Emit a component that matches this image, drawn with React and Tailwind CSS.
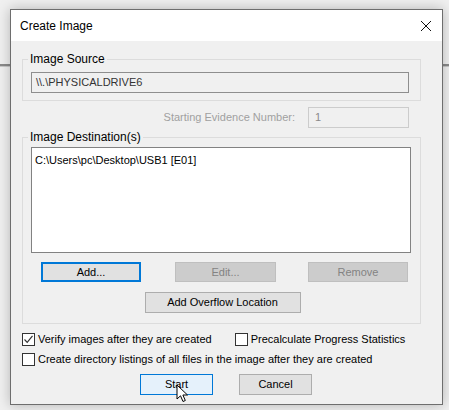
import React from 'react'

const font = { fontFamily: '"Liberation Sans", Arial, sans-serif' }

const Btn = ({ children, className = '' }) => (
  <div
    className={`flex items-center justify-center h-[20px] border text-[11px] leading-none whitespace-nowrap ${className}`}
  >
    {children}
  </div>
)

const Check = ({ checked }) => (
  <div className="w-[13px] h-[13px] border border-[#333] bg-white flex items-center justify-center shrink-0">
    {checked && (
      <svg width="11" height="11" viewBox="0 0 11 11">
        <path d="M1.5 5.5 L4.2 8.3 L9.5 1.8" fill="none" stroke="#333" strokeWidth="1.2" />
      </svg>
    )}
  </div>
)

const Cursor = () => (
  <svg width="14" height="20" viewBox="0 0 14 20" className="absolute left-[176px] top-[384px] z-20">
    <path
      d="M1 1 L1 15 L4.5 11.8 L7 17.5 L9.3 16.5 L6.9 11 L11.5 11 Z"
      fill="#fff"
      stroke="#000"
      strokeWidth="1"
      strokeLinejoin="round"
    />
  </svg>
)

export default function App() {
  return (
    <div className="relative w-[449px] h-[410px] bg-[#f0f0f0] overflow-hidden" style={font}>
      <div className="absolute left-0 right-0 top-[64px] h-[2px] bg-[#8a8a8a]" />
      <div className="absolute left-0 right-0 top-[66px] h-[1px] bg-[#c8c8c8]" />

      <div className="relative z-10 ml-[10px] mt-[9px] w-[433px] h-[396px] border border-[#6e6e6e] bg-[#f0f0f0] shadow-[0_0_12px_rgba(0,0,0,0.25)] flex flex-col">
        <div className="h-[31px] bg-white flex items-center justify-between pl-[9px] pr-[10px] shrink-0">
          <span className="text-[12px] text-black">Create Image</span>
          <svg width="12" height="12" viewBox="0 0 12 12">
            <path d="M1 1 L11 11 M11 1 L1 11" stroke="#111" strokeWidth="1" />
          </svg>
        </div>

        <div className="px-[11px] text-[11px] text-black whitespace-nowrap">
          <fieldset className="mt-[10px] w-[399px] h-[50px] border border-[#dcdcdc]">
            <legend className="ml-[5px] px-[2px] leading-[16px] text-[12px]">Image Source</legend>
            <div className="ml-[8px] mt-[5px] w-[378px] h-[21px] border border-[#8e8e8e] bg-[#f0f0f0] flex items-center pl-[4px] text-[#333]">
              \\.\PHYSICALDRIVE6
            </div>
          </fieldset>

          <div className="mt-[6px] flex items-center justify-end pr-[22px]">
            <span className="text-[#a0a0a0] mr-[13px]">Starting Evidence Number:</span>
            <div className="w-[101px] h-[21px] border border-[#cccccc] flex items-center pl-[6px] text-[#8a8a8a]">
              1
            </div>
          </div>

          <fieldset className="mt-[1px] w-[399px] h-[195px] border border-[#dcdcdc]">
            <legend className="ml-[5px] px-[2px] leading-[16px] text-[12px]">Image Destination(s)</legend>
            <div className="ml-[8px] mt-[2px] w-[380px] h-[106px] border border-[#828282] bg-white pl-[3px] pt-[4px]">
              C:\Users\pc\Desktop\USB1 [E01]
            </div>
            <div className="ml-[8px] mt-[9px] flex items-center">
              <Btn className="ml-[10px] w-[100px] border-2 border-[#0078d7] bg-[#e1e1e1]">Add...</Btn>
              <Btn className="ml-[34px] w-[101px] border-[#bfbfbf] bg-[#cccccc] text-[#838383]">Edit...</Btn>
              <Btn className="ml-[32px] w-[100px] border-[#bfbfbf] bg-[#cccccc] text-[#838383]">Remove</Btn>
            </div>
            <div className="mt-[10px] flex justify-center pl-[2px]">
              <Btn className="w-[156px] h-[21px] border-[#adadad] bg-[#e1e1e1]">Add Overflow Location</Btn>
            </div>
          </fieldset>

          <div className="mt-[8px] flex items-center h-[15px]">
            <Check checked />
            <span className="ml-[3px]">Verify images after they are created</span>
            <div className="ml-[23px] flex items-center">
              <Check />
              <span className="ml-[3px]">Precalculate Progress Statistics</span>
            </div>
          </div>
          <div className="mt-[5px] flex items-center h-[15px]">
            <Check />
            <span className="ml-[3px]">Create directory listings of all files in the image after they are created</span>
          </div>

          <div className="mt-[7px] flex justify-center gap-[26px] pr-[1px]">
            <Btn className="w-[73px] h-[21px] border-[#0078d7] bg-[#e5f1fb]">Start</Btn>
            <Btn className="w-[73px] h-[21px] border-[#adadad] bg-[#e1e1e1]">Cancel</Btn>
          </div>
        </div>
      </div>
      <Cursor />
    </div>
  )
}
